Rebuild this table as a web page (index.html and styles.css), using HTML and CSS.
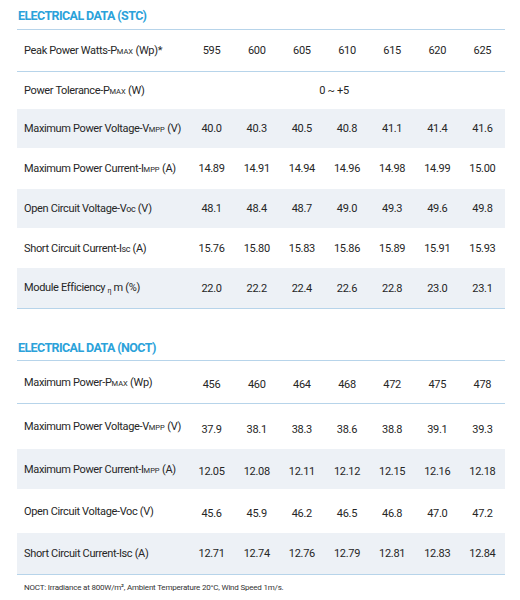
FILE: index.html
```html
<!DOCTYPE html>
<html>
<head>
<meta charset="utf-8">
<link rel="stylesheet" href="styles.css">
</head>
<body>
<div class="page">
  <h2 class="title">ELECTRICAL DATA (STC)</h2>
  <div class="table">
    <div class="row h42 line">
      <div class="label">Peak Power Watts-P<span class="sc">MAX</span> (Wp)*</div>
      <div>595</div><div>600</div><div>605</div><div>610</div><div>615</div><div>620</div><div>625</div>
    </div>
    <div class="row h37">
      <div class="label">Power Tolerance-P<span class="sc">MAX</span> (W)</div>
      <div class="span">0 ~ +5</div>
    </div>
    <div class="row h39 shade">
      <div class="label">Maximum Power Voltage-V<span class="sc">MPP</span> (V)</div>
      <div>40.0</div><div>40.3</div><div>40.5</div><div>40.8</div><div>41.1</div><div>41.4</div><div>41.6</div>
    </div>
    <div class="row h41">
      <div class="label">Maximum Power Current-I<span class="sc">MPP</span> (A)</div>
      <div>14.89</div><div>14.91</div><div>14.94</div><div>14.96</div><div>14.98</div><div>14.99</div><div>15.00</div>
    </div>
    <div class="row h39 shade">
      <div class="label">Open Circuit Voltage-V<span class="sm">oc</span> (V)</div>
      <div>48.1</div><div>48.4</div><div>48.7</div><div>49.0</div><div>49.3</div><div>49.6</div><div>49.8</div>
    </div>
    <div class="row h40">
      <div class="label">Short Circuit Current-I<span class="sm">sc</span> (A)</div>
      <div>15.76</div><div>15.80</div><div>15.83</div><div>15.86</div><div>15.89</div><div>15.91</div><div>15.93</div>
    </div>
    <div class="row h40 shade">
      <div class="label">Module Efficiency <span class="eta">η</span> m (%)</div>
      <div>22.0</div><div>22.2</div><div>22.4</div><div>22.6</div><div>22.8</div><div>23.0</div><div>23.1</div>
    </div>
  </div>

  <h2 class="title second">ELECTRICAL DATA (NOCT)</h2>
  <div class="table">
    <div class="row h43 line">
      <div class="label">Maximum Power-P<span class="sc">MAX</span> (Wp)</div>
      <div class="low">456</div><div class="low">460</div><div class="low">464</div><div class="low">468</div><div class="low">472</div><div class="low">475</div><div class="low">478</div>
    </div>
    <div class="row h45">
      <div class="label">Maximum Power Voltage-V<span class="sc">MPP</span> (V)</div>
      <div class="low">37.9</div><div class="low">38.1</div><div class="low">38.3</div><div class="low">38.6</div><div class="low">38.8</div><div class="low">39.1</div><div class="low">39.3</div>
    </div>
    <div class="row h40 shade">
      <div class="label">Maximum Power Current-I<span class="sc">MPP</span> (A)</div>
      <div class="low">12.05</div><div class="low">12.08</div><div class="low">12.11</div><div class="low">12.12</div><div class="low">12.15</div><div class="low">12.16</div><div class="low">12.18</div>
    </div>
    <div class="row h44">
      <div class="label">Open Circuit Voltage-Voc (V)</div>
      <div class="low">45.6</div><div class="low">45.9</div><div class="low">46.2</div><div class="low">46.5</div><div class="low">46.8</div><div class="low">47.0</div><div class="low">47.2</div>
    </div>
    <div class="row h42 shade">
      <div class="label">Short Circuit Current-Isc (A)</div>
      <div>12.71</div><div>12.74</div><div>12.76</div><div>12.79</div><div>12.81</div><div>12.83</div><div>12.84</div>
    </div>
  </div>
  <p class="note">NOCT: Irradiance at 800W/m², Ambient Temperature 20°C, Wind Speed 1m/s.</p>
</div>
</body>
</html>
```
FILE: styles.css
```css
html, body {
  margin: 0;
  padding: 0;
  background: #ffffff;
}
.page {
  width: 520px;
  height: 600px;
  padding: 8px 15px 0 17px;
  box-sizing: border-box;
  font-family: Roboto, "Noto Sans", sans-serif;
  color: #262626;
  overflow: hidden;
}
.title {
  margin: 0 0 0 1px;
  height: 21px;
  font-size: 12.5px;
  font-weight: 700;
  letter-spacing: -0.6px;
  color: #2ba2da;
  line-height: 15px;
}
.title.second {
  margin-top: 32px;
  height: 19px;
  line-height: 14px;
}
.table {
  width: 488px;
  border-top: 1px solid #b7d4ea;
  border-bottom: 1px solid #b7d4ea;
}
.row {
  display: grid;
  grid-template-columns: 172px repeat(7, 1fr);
  align-items: center;
  font-size: 11px;
  letter-spacing: -0.3px;
}
.row > div {
  text-align: center;
}
.row > .label {
  text-align: left;
  padding-left: 7px;
  letter-spacing: -0.35px;
}
.row .low {
  padding-top: 5px;
}
.row .span {
  grid-column: 2 / span 7;
  padding-right: 26px;
}
.line {
  border-bottom: 1px solid #b7d4ea;
}
.shade {
  background: #edf1f6;
}
.sc {
  font-size: 7.5px;
  letter-spacing: 0;
}
.sm {
  font-size: 9px;
}
.eta {
  font-size: 7px;
  vertical-align: -2px;
}
.h37 { height: 37px; }
.h39 { height: 39px; }
.h40 { height: 40px; }
.h41 { height: 41px; }
.h42 { height: 41px; }
.h43 { height: 42px; }
.h44 { height: 44px; }
.h45 { height: 45px; }
.note {
  margin: 8px 0 0 7px;
  font-size: 8px;
  letter-spacing: -0.2px;
  color: #333;
}
```
